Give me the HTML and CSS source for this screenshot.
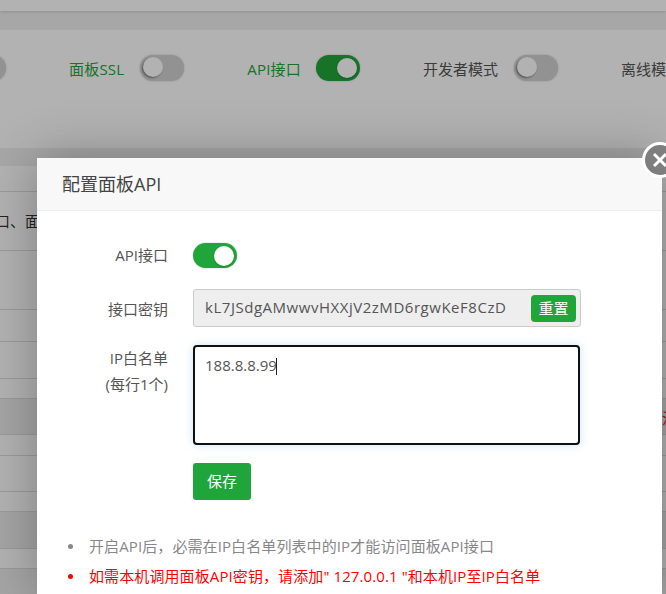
FILE: index.html
```html
<!DOCTYPE html>
<html lang="zh-CN">
<head>
<meta charset="utf-8">
<title>配置面板API</title>
<link rel="stylesheet" href="styles.css">
</head>
<body>
<div class="page">
  <div class="topbar"></div>
  <section class="panel">
    <div class="setting">
      <span class="switch"><i class="knob"></i></span>
    </div>
    <div class="setting">
      <span class="label on">面板SSL</span>
      <span class="switch"><i class="knob"></i></span>
    </div>
    <div class="setting">
      <span class="label on">API接口</span>
      <span class="switch checked"><i class="knob"></i></span>
    </div>
    <div class="setting">
      <span class="label">开发者模式</span>
      <span class="switch"><i class="knob"></i></span>
    </div>
    <div class="setting">
      <span class="label">离线模式</span>
      <span class="switch"><i class="knob"></i></span>
    </div>
  </section>
  <div class="table">
    <div class="row h26"></div>
    <div class="row h59"><span class="cut">接口、面板设置</span></div>
    <div class="row h59"></div>
    <div class="row h32"></div>
    <div class="row h37"></div>
    <div class="row h20"></div>
    <div class="row h36 alt"><span class="flag">注意事项</span></div>
    <div class="row h21"></div>
    <div class="row h36"></div>
    <div class="row h20"></div>
    <div class="row h37 alt"></div>
    <div class="row h20"></div>
    <div class="row h26 alt"></div>
  </div>
</div>

<div class="backdrop"></div>

<div class="modal">
  <header class="modal-head">配置面板API</header>
  <button class="close" type="button" aria-label="关闭">
    <svg viewBox="0 0 16 16" width="16" height="16"><path d="M2 2 14 14M14 2 2 14"/></svg>
  </button>
  <div class="modal-body">
    <div class="field f-switch">
      <span class="f-label">API接口</span>
      <span class="switch checked modal-switch"><i class="knob"></i></span>
    </div>
    <div class="field f-key">
      <span class="f-label key-label">接口密钥</span>
      <div class="key">
        <span class="key-text">kL7JSdgAMwwvHXXjV2zMD6rgwKeF8CzD</span>
        <button class="btn-reset" type="button">重置</button>
      </div>
    </div>
    <div class="field f-ip">
      <span class="f-label tall">IP白名单<br>(每行1个)</span>
      <div class="ip-box">188.8.8.99<span class="caret"></span></div>
    </div>
    <div class="field f-save">
      <span></span>
      <button class="btn-save" type="button">保存</button>
    </div>
    <ul class="notes">
      <li>开启API后，必需在IP白名单列表中的IP才能访问面板API接口</li>
      <li class="warn">如需本机调用面板API密钥，请添加" 127.0.0.1 "和本机IP至IP白名单</li>
    </ul>
  </div>
</div>
</body>
</html>
```
FILE: styles.css
```css
* { box-sizing: border-box; }
html, body {
  margin: 0;
  height: 594px;
  overflow: hidden;
}
body {
  position: relative;
  background: #f0f0f0;
  color: #333;
  font: 15px/1.4 "Open Sans", "Noto Sans CJK SC", sans-serif;
}
.page { width: 666px; overflow: hidden; height: 594px; }
.topbar {
  height: 11px;
  background: #fff;
  box-shadow: 0 1px 3px rgba(0, 0, 0, .15);
}
.panel {
  margin-top: 19px;
  height: 118px;
  background: #fff;
  display: flex;
  gap: 63px;
  padding: 25px 0 0 0;
  white-space: nowrap;
}
.setting { display: flex; align-items: flex-start; gap: 16px; flex: none; }
.setting:first-child { margin-left: -38px; }
.label { font-size: 15px; line-height: 29px; color: #555; }
.label.on { color: #20a53a; letter-spacing: .2px; }
.switch {
  position: relative;
  display: block;
  flex: none;
  width: 44px;
  height: 26px;
  border-radius: 13px;
  background: #d2d2d2;
  box-shadow: 0 0 2px rgba(0, 0, 0, .25);
}
.knob {
  position: absolute;
  left: 3px;
  top: 2px;
  width: 20px;
  height: 20px;
  border-radius: 50%;
  background: #fff;
  box-shadow: -1px 1px 2px rgba(0, 0, 0, .45);
}
.switch.checked { background: #20a53a; margin-left: -1px; }
.switch.checked .knob { left: 21px; top: 3px; box-shadow: 0 1px 2px rgba(0, 0, 0, .2); }
.table { margin-top: 18px; }
.row {
  position: relative;
  background: #fff;
  border-bottom: 1px solid #ddd;
  overflow: hidden;
  white-space: nowrap;
}
.row.alt { background: #ececec; }
.h20 { height: 20px; }
.h21 { height: 21px; }
.h26 { height: 26px; }
.h32 { height: 32px; }
.h36 { height: 36px; }
.h37 { height: 37px; }
.h59 { height: 59px; }
.cut { display: block; margin-left: -20px; line-height: 58px; color: #333; }
.flag { display: block; margin-left: 662px; line-height: 39px; color: #f00; }

.backdrop {
  position: absolute;
  inset: 0;
  background: rgba(0, 0, 0, .3);
}
.modal {
  position: absolute;
  left: 37px;
  top: 158px;
  width: 625px;
  height: 436px;
  background: #fff;
  box-shadow: 1px 1px 50px rgba(0, 0, 0, .3);
}
.modal-head {
  height: 53px;
  padding-left: 25px;
  background: #f8f8f8;
  border-bottom: 1px solid #eee;
  font-size: 18px;
  line-height: 52px;
  color: #444;
}
.close {
  position: absolute;
  right: -16px;
  top: -16px;
  width: 36px;
  height: 36px;
  padding: 0;
  display: flex;
  align-items: center;
  justify-content: center;
  border: 3px solid #fff;
  border-radius: 50%;
  background: #7e7e7e;
}
.close path { fill: none; stroke: #fff; stroke-width: 3; }
.modal-body { padding-top: 32px; }
.field {
  display: grid;
  grid-template-columns: 131px 388px;
  column-gap: 25px;
}
.f-label { text-align: right; color: #555; }
.key-label { padding-top: 2px; }
.f-switch { height: 25px; align-items: center; }
.f-key { margin-top: 21px; height: 38px; align-items: center; }
.f-ip { margin-top: 18px; height: 100px; }
.f-save { margin-top: 18px; height: 37px; }
.tall { line-height: 26px; }
.switch.modal-switch { height: 25px; margin-left: 0; }
.key {
  position: relative;
  height: 38px;
  display: flex;
  align-items: center;
  justify-content: space-between;
  padding: 0 4px 0 11px;
  background: #eee;
  border: 1px solid #ccc;
  border-radius: 3px;
  color: #555;
}
.key-text { white-space: nowrap; letter-spacing: .53px; position: relative; top: -1px; }
.btn-reset, .btn-save {
  border: 0;
  background: #20a53a;
  color: #fff;
  font: inherit;
  padding: 0;
}
.btn-reset { width: 45px; height: 27px; border-radius: 4px; }
.btn-save { width: 58px; height: 37px; border-radius: 3px; }
.ip-box {
  width: 387px;
  height: 100px;
  padding: 6px 10px;
  border: 2px solid #101010;
  border-radius: 4px;
  background: #fff;
  box-shadow: 0 0 8px rgba(102, 175, 233, .35);
  color: #555;
  line-height: 24px;
}
.caret {
  display: inline-block;
  width: 1px;
  height: 17px;
  margin-left: -1px;
  vertical-align: -4px;
  background: #222;
}
.notes {
  margin: 31px 0 0;
  padding: 0 0 0 31px;
  list-style: none;
  color: #888;
  line-height: 30px;
  letter-spacing: .1px;
}
.notes li { display: flex; align-items: center; white-space: nowrap; }
.notes li::before {
  content: "";
  flex: none;
  width: 5px;
  height: 5px;
  margin-right: 16px;
  border-radius: 50%;
  background: currentColor;
}
.notes .warn { color: #f00; }
```
